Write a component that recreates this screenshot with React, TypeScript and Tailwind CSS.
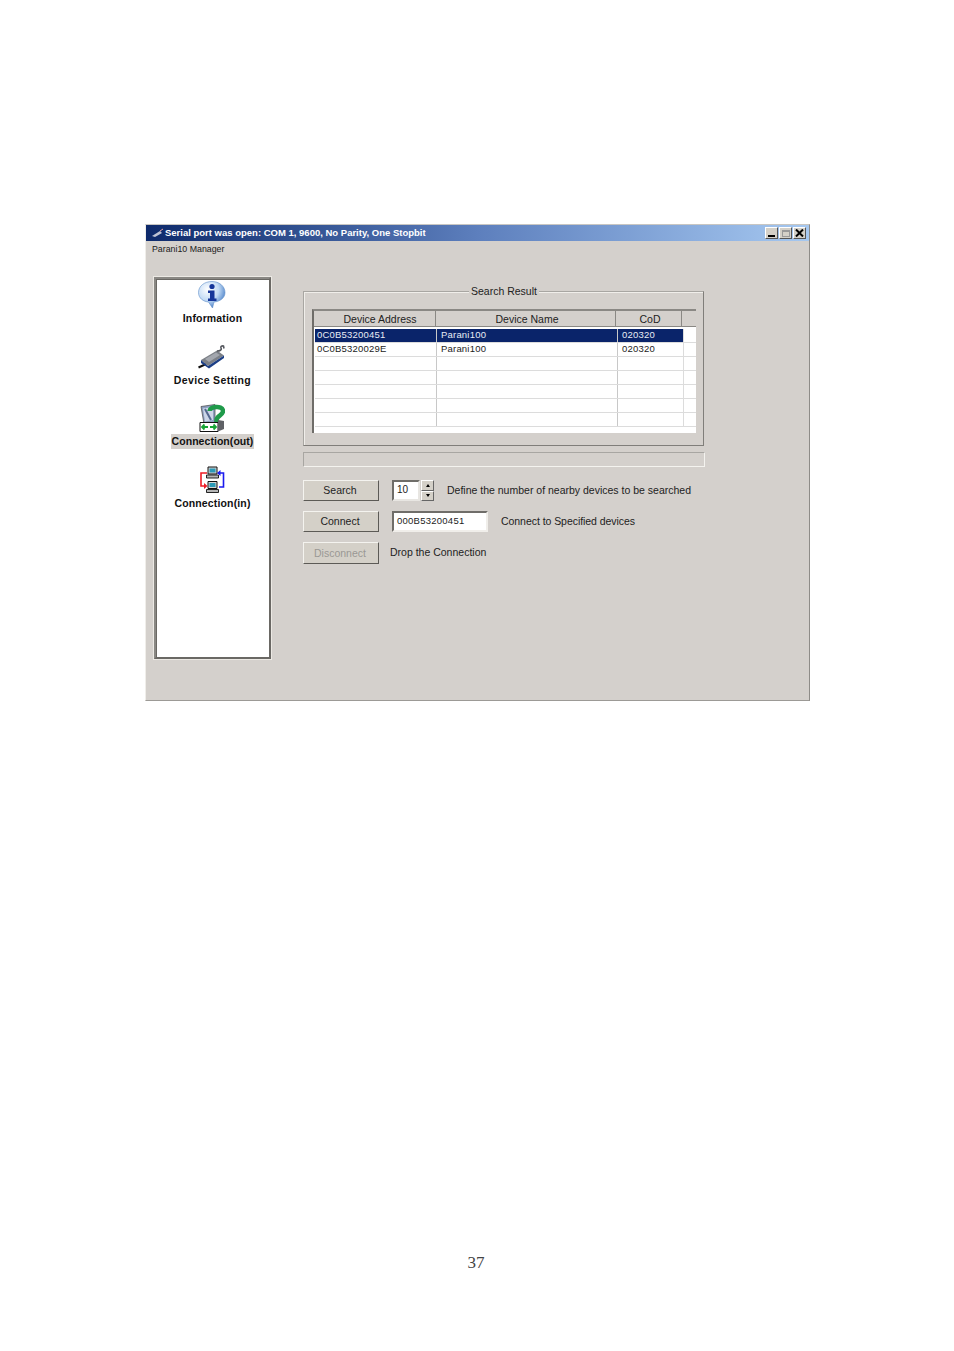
import React from "react";

const rows = [
  { a: "0C0B53200451", n: "Parani100", c: "020320", sel: true },
  { a: "0C0B5320029E", n: "Parani100", c: "020320", sel: false },
  { a: "", n: "", c: "", sel: false },
  { a: "", n: "", c: "", sel: false },
  { a: "", n: "", c: "", sel: false },
  { a: "", n: "", c: "", sel: false },
  { a: "", n: "", c: "", sel: false },
];

function InfoIcon() {
  return (
    <svg width="28" height="28" viewBox="0 0 28 28">
      <defs>
        <radialGradient id="bub" cx="35%" cy="30%" r="75%">
          <stop offset="0%" stopColor="#ffffff" />
          <stop offset="55%" stopColor="#c3dbf5" />
          <stop offset="100%" stopColor="#3f78c4" />
        </radialGradient>
      </defs>
      <path d="M14 0.500C6.500 0.500 0.500 5 0.500 11.500C0.500 17.500 5.500 20.500 10.500 21L14.500 27L16 21C22 20.500 27 17 27 11.500C27 5 21 0.500 14 0.500Z" fill="url(#bub)" stroke="#5f8fca" strokeWidth="0.600" />
      <circle cx="14" cy="5.500" r="2.600" fill="#16369a" />
      <path d="M10 9.500H16.500V17.500H18.500V20H10V17.500H12V12H10Z" fill="#16369a" />
    </svg>
  );
}

function DeviceIcon() {
  return (
    <svg width="28" height="24" viewBox="0 0 28 24">
      <path d="M0.500 22.500L8 19" stroke="#111" strokeWidth="2" />
      <path d="M3 15L19 5.500L26 10.500L10 21Z" fill="#7c8087" />
      <path d="M7 14L18 7.500L22 10L11 17Z" fill="#a3a7ae" />
      <path d="M3 15L10 21L26 10.500V13L11 23.500L3 18Z" fill="#1c3f86" />
      <path d="M19 6C22 6 24 5 23 3C22.500 1.500 24 0.500 25.500 1L26 3.500" stroke="#55585e" strokeWidth="1.600" fill="none" />
    </svg>
  );
}

function OutIcon() {
  return (
    <svg width="26" height="28" viewBox="0 0 26 28">
      <path d="M2 2.500L16 0.500V19L5 20Z" fill="#8d9fc0" stroke="#444" strokeWidth="0.700" />
      <path d="M4 4.500L14 3V16L6 17.500Z" fill="#cdd6e8" />
      <path d="M6 5L12 16" stroke="#54688f" strokeWidth="2" />
      <path d="M10.500 7C10.500 2.500 23 1 24 6.500C24.800 11.500 17.500 11 17.500 16.500V19" stroke="#1f9a4a" strokeWidth="4.500" fill="none" />
      <path d="M1 18.500H19V27.500H1Z" fill="#ffffff" stroke="#111" strokeWidth="1" />
      <path d="M19 16L25 17V25L19 27.500Z" fill="#5f6166" />
      <path d="M3 23H9M5.500 20.500L3 23L5.500 25.500" stroke="#16a535" strokeWidth="1.800" fill="none" />
      <path d="M11 23H17M14.500 20.500L17 23L14.500 25.500" stroke="#16a535" strokeWidth="1.800" fill="none" />
    </svg>
  );
}

function InIcon() {
  const pc = (y: number) => (
    <g transform={`translate(7 ${y})`}>
      <path d="M2 0.500H11V7.500H2Z" fill="#d4d4d4" stroke="#111" strokeWidth="1" />
      <path d="M3.500 2H9.500V6H3.500Z" fill="#2a9ab8" />
      <path d="M0.500 8.500H12.500V11.500H0.500Z" fill="#b5b5b5" stroke="#111" strokeWidth="0.900" />
    </g>
  );
  return (
    <svg width="26" height="28" viewBox="0 0 26 28">
      {pc(0.500)}
      {pc(15)}
      <path d="M8 7H2V20H6" stroke="#ee1c25" strokeWidth="1.600" fill="none" />
      <path d="M5 17L8.500 20L5 23Z" fill="#ee1c25" />
      <path d="M20 21H24.500V7H21" stroke="#1a1aee" strokeWidth="1.600" fill="none" />
      <path d="M21.500 4L18 7L21.500 10Z" fill="#1a1aee" />
    </svg>
  );
}

function NavItem({ icon, label, active, track }: { icon: React.ReactNode; label: string; active?: boolean; track: string }) {
  return (
    <div className="flex flex-col items-center h-[61.500px]">
      <div className="h-[28px] pr-[2px] flex items-center justify-center">{icon}</div>
      <span className={`mt-[2px] px-[1px] h-[15px] leading-[15px] text-[10.500px] font-bold text-[#111] ${track} ${active ? "bg-[#d4d0cc]" : ""}`}>
        {label}
      </span>
    </div>
  );
}

function Btn({ label, disabled, tall }: { label: string; disabled?: boolean; tall?: boolean }) {
  return (
    <button className={`w-[76px] ${tall ? "h-[22px]" : "h-[21px]"} pr-[2px] bg-[#d4d0c8] border border-t-[#f4f3ef] border-l-[#f4f3ef] border-r-[#5c5a56] border-b-[#5c5a56] text-[10.500px] leading-none ${disabled ? "text-[#9a9894]" : "text-[#222]"}`}>
      {label}
    </button>
  );
}

export default function App() {
  return (
    <div className="w-[954px] h-[1351px] bg-white pt-[224px] pl-[145px] flex flex-col" style={{ fontFamily: '"Liberation Sans", Arial, sans-serif' }}>
      <div className="w-[665px] h-[477px] bg-[#d4d0cc] border-l border-l-[#f0eeea] border-r border-r-[#8e8c88] border-b border-b-[#9c9a96] border-t border-t-[#c8c6c2] flex flex-col text-[#222]">
        <div className="h-[16px] flex items-center pl-[5px] pr-[2px] bg-gradient-to-r from-[#0e2a6b] via-[#5d7fbd] to-[#a6c8f0]">
          <svg width="13" height="10" viewBox="0 0 13 10" className="mr-[1px]">
            <path d="M1 8L9 3L11 5L4 9Z" fill="#bfc4d4" />
            <path d="M9 3L12 1" stroke="#e8a0a0" strokeWidth="1" />
          </svg>
          <span className="text-[9.500px] font-bold text-white whitespace-nowrap">
            Serial port was open: COM 1, 9600, No Parity, One Stopbit
          </span>
          <div className="ml-auto flex gap-[1px] mr-[1px]">
            <span className="w-[13px] h-[12px] bg-[#d4d0c8] border border-b-[#555] border-r-[#555] border-t-white border-l-white flex items-end pl-[2px] pb-[1px]">
              <span className="w-[7px] h-[2px] bg-black" />
            </span>
            <span className="w-[13px] h-[12px] bg-[#d4d0c8] border border-b-[#555] border-r-[#555] border-t-white border-l-white flex items-center justify-center">
              <span className="w-[8px] h-[7px] border border-[#999] border-t-2" />
            </span>
            <span className="w-[13px] h-[12px] bg-[#d4d0c8] border border-b-[#555] border-r-[#555] border-t-white border-l-white flex items-center justify-center">
              <svg width="9" height="8" viewBox="0 0 9 8"><path d="M1 0.500L8 7.500M8 0.500L1 7.500" stroke="#000" strokeWidth="2" /></svg>
            </span>
          </div>
        </div>

        <div className="h-[16px] pl-[6px] text-[8.800px] leading-[16px]">Parani10 Manager</div>

        <div className="flex mt-[20px]">
          <div className="ml-[8px] w-[117px] h-[382px] bg-white border-2 border-t-[#8a8884] border-l-[#8a8884] border-r-[#6a6864] border-b-[#6a6864] shadow-[inset_1px_1px_0_#6a6864,0_0_0_1px_#ece9e4] pt-[2px]">
            <NavItem icon={<InfoIcon />} label="Information" track="tracking-[0.150px]" />
            <NavItem icon={<DeviceIcon />} label="Device Setting" track="tracking-[0.350px]" />
            <NavItem icon={<OutIcon />} label="Connection(out)" active track="tracking-[0.050px]" />
            <NavItem icon={<InIcon />} label="Connection(in)" track="tracking-[0.150px]" />
          </div>

          <div className="ml-[32px] w-[402px] flex flex-col">
            <div className="relative mt-[14px] w-[401px] h-[155px] border border-t-[#a8a6a2] border-l-[#a8a6a2] border-r-[#807e7a] border-b-[#807e7a] shadow-[inset_1px_1px_0_#f0eeea] pt-[17px] pl-[8px]">
              <span className="absolute -top-[7px] left-[165px] px-[2px] bg-[#d4d0cc] text-[10.500px] leading-[12px]">Search Result</span>
              <div className="w-[384px] h-[124px] bg-white border-l-2 border-t-2 border-l-[#6f6d69] border-t-[#8a8884] flex flex-col overflow-hidden">
                <div className="flex h-[16px] bg-[#d4d0cc] border-b border-b-[#8a8884] text-[10.500px] leading-[16px] shrink-0">
                  <div className="w-[122px] text-center border-r border-r-[#8a8884] pl-[11px]">Device Address</div>
                  <div className="w-[180px] text-center border-r border-r-[#8a8884] pl-[3px]">Device Name</div>
                  <div className="w-[66px] text-center border-r border-r-[#8a8884] pl-[3px]">CoD</div>
                  <div className="flex-1" />
                </div>
                <div className="pt-[2px] pl-[1px]">
                  {rows.map((r, i) => (
                    <div key={i} className="flex h-[14px] text-[9.500px] leading-[12px] tracking-[0.200px] border-b border-b-[#dcdcdc]">
                      <div className={`w-[368px] flex ${r.sel ? "bg-[#0a246a] text-[#e8ecf5]" : "text-[#222]"}`}>
                        <div className="w-[122px] pl-[2px] border-r border-r-[#c8c8c8]">{r.a}</div>
                        <div className="w-[181px] pl-[4px] border-r border-r-[#c8c8c8]">{r.n}</div>
                        <div className="flex-1 pl-[4px]">{r.c}</div>
                      </div>
                      <div className="flex-1 border-l border-l-[#dcdcdc]" />
                    </div>
                  ))}
                </div>
              </div>
            </div>

            <div className="mt-[6px] w-[402px] h-[15px] border border-t-[#a8a6a2] border-l-[#a8a6a2] border-r-[#f4f3ef] border-b-[#f4f3ef]" />

            <div className="mt-[13px] flex items-center h-[21px]">
              <Btn label="Search" />
              <div className="ml-[13px] flex h-[21px]">
                <div className="w-[28px] bg-white border-2 border-t-[#6f6d69] border-l-[#6f6d69] border-r-[#e8e6e2] border-b-[#e8e6e2] text-[10px] leading-[16px] pl-[3px]">10</div>
                <div className="ml-[1px] w-[13px] flex flex-col">
                  <span className="h-[10.500px] bg-[#d4d0c8] border border-t-white border-l-white border-r-[#666] border-b-[#666] flex items-center justify-center">
                    <span className="border-x-[2.500px] border-x-transparent border-b-[3px] border-b-black" />
                  </span>
                  <span className="h-[10.500px] bg-[#d4d0c8] border border-t-white border-l-white border-r-[#666] border-b-[#666] flex items-center justify-center">
                    <span className="border-x-[2.500px] border-x-transparent border-t-[3px] border-t-black" />
                  </span>
                </div>
              </div>
              <span className="ml-[13px] text-[10.500px] whitespace-nowrap">Define the number of nearby devices to be searched</span>
            </div>

            <div className="mt-[10px] flex items-center h-[21px]">
              <Btn label="Connect" />
              <div className="ml-[13px] w-[96px] h-[21px] bg-white border-2 border-t-[#6f6d69] border-l-[#6f6d69] border-r-[#f0eeea] border-b-[#f0eeea] text-[9.500px] leading-[15px] pl-[3px] tracking-[0.250px]">000B53200451</div>
              <span className="ml-[13px] text-[10.500px] whitespace-nowrap tracking-[-0.050px]">Connect to Specified devices</span>
            </div>

            <div className="mt-[10px] flex items-center h-[22px]">
              <Btn label="Disconnect" disabled tall />
              <span className="ml-[11px] text-[10.500px] whitespace-nowrap">Drop the Connection</span>
            </div>
          </div>
        </div>
      </div>

      <div className="mt-[552px] w-[662px] text-center text-[17px] leading-[20px] text-[#444]" style={{ fontFamily: '"Liberation Serif", serif' }}>37</div>
    </div>
  );
}
